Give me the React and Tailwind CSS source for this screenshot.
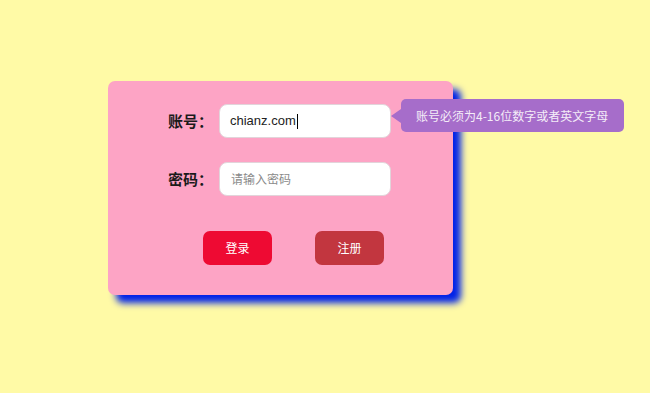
export default function App() {
  return (
    <div className="min-h-[393px] w-full bg-[#fffaa6] pl-[108px] pt-[81px] font-['Noto_Sans_CJK_SC','Liberation_Sans',sans-serif]">
      <div className="relative h-[214px] w-[345px] rounded-[7px] bg-[#fda4c5] shadow-[8px_8px_7px_#0022e8]">
        <div className="flex flex-col gap-6 pt-[23px]">
          <div className="flex items-center">
            <label className="w-[105px] text-right text-[15px] font-bold text-[#1a1a1a]">账号：</label>
            <div className="ml-[6px] flex h-[34px] w-[172px] items-center rounded-[8px] border border-[#e2d4da] bg-white px-[10px] text-[13px] text-[#222] font-['Liberation_Sans','Noto_Sans_CJK_SC',sans-serif]">
              chianz.com
              <span className="ml-px inline-block h-[15px] w-px bg-black" />
            </div>
          </div>
          <div className="flex items-center">
            <label className="w-[105px] text-right text-[15px] font-bold text-[#1a1a1a]">密码：</label>
            <div className="ml-[6px] flex h-[34px] w-[172px] items-center rounded-[8px] border border-[#e2d4da] bg-white px-[11px] text-[12px] text-[#8a8a8a]">
              请输入密码
            </div>
          </div>
        </div>
        <div className="mt-[35px] flex gap-[43px] pl-[95px]">
          <button className="h-[34px] w-[69px] rounded-[7px] bg-[#ee0a33] text-[12px] text-white">登录</button>
          <button className="h-[34px] w-[69px] rounded-[7px] bg-[#c2363f] text-[12px] text-white">注册</button>
        </div>

        <div className="absolute left-[293px] top-[18px] flex h-[33px] w-[223px] items-center whitespace-nowrap rounded-[5px] bg-[#a66dca] pl-[15px] text-[12px] text-[#f4ecf8]">
          <span className="absolute left-[-10px] top-[10px] h-0 w-0 border-y-[7px] border-r-[10px] border-y-transparent border-r-[#a66dca]" />
          账号必须为4-16位数字或者英文字母
        </div>
      </div>
    </div>
  );
}
